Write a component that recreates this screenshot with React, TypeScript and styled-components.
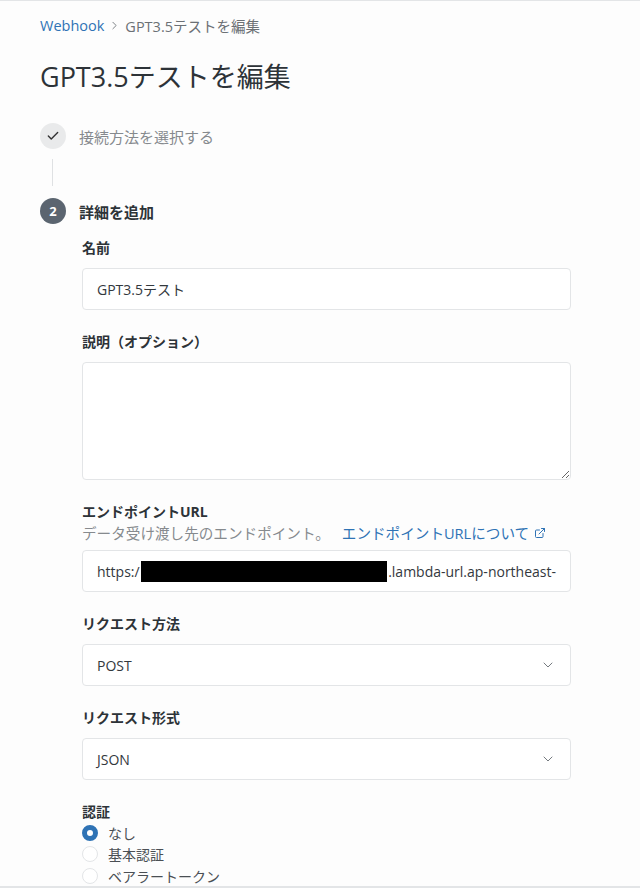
import React from 'react';
import styled, {createGlobalStyle} from 'styled-components';
import {Check, ChevronDown, ChevronRight, ExternalLink} from 'lucide-react';

const GlobalStyle = createGlobalStyle`
  * {
    box-sizing: border-box;
  }

  body {
    margin: 0;
    background: #fdfdfd;
    font-family: "Open Sans", "Noto Sans CJK JP", "Noto Sans", sans-serif;
    color: #2d3338;
  }
`;

const Page = styled.div`
  height: 888px;
  padding: 0 40px;
  border-top: 1px solid #e3e5e7;
  border-bottom: 2px solid #e3e5e7;
  overflow: hidden;
`;

const Breadcrumb = styled.nav`
  display: flex;
  align-items: center;
  gap: 4px;
  height: 20px;
  margin-top: 14px;
  font-size: 14.5px;
  color: #6b7075;
`;

const CrumbLink = styled.a`
  color: #2f73b5;
  text-decoration: none;
`;

const Title = styled.h1`
  margin: 24px 0 0;
  font-size: 27px;
  font-weight: 400;
  line-height: 36px;
  color: #2d3338;
`;

const Step = styled.div`
  display: flex;
  align-items: center;
  gap: 13px;
`;

const StepCircle = styled.div<{$active?: boolean}>`
  display: flex;
  align-items: center;
  justify-content: center;
  width: 26px;
  height: 26px;
  border-radius: 50%;
  background: ${({$active}) => ($active ? '#5b6570' : '#e9eaeb')};
  color: ${({$active}) => ($active ? '#fff' : '#333')};
  font-size: 13px;
  font-weight: 700;
`;

const StepText = styled.span<{$active?: boolean}>`
  font-size: 15px;
  font-weight: ${({$active}) => ($active ? 700 : 400)};
  color: ${({$active}) => ($active ? '#2d3338' : '#868a8e')};
`;

const FirstStep = styled(Step)`
  margin-top: 28px;
`;

const Connector = styled.div`
  width: 1px;
  height: 27px;
  margin: 10px 0 12px 12px;
  background: #dfe1e3;
`;

const Form = styled.div`
  display: flex;
  flex-direction: column;
  gap: 22px;
  width: 489px;
  margin: 14px 0 0 42px;
`;

const Field = styled.div`
  display: flex;
  flex-direction: column;
`;

const Label = styled.label`
  font-size: 14px;
  font-weight: 700;
  line-height: 20px;
  color: #2d3338;
`;

const Help = styled.div`
  display: flex;
  align-items: center;
  gap: 12px;
  font-size: 14.6px;
  line-height: 22px;
  color: #868a8e;
`;

const HelpLink = styled.a`
  display: inline-flex;
  align-items: center;
  gap: 5px;
  color: #2f73b5;
  text-decoration: none;
`;

const Box = styled.div`
  display: flex;
  align-items: center;
  justify-content: space-between;
  height: 42px;
  margin-top: 10px;
  padding: 0 14px;
  border: 1px solid #e3e5e7;
  border-radius: 4px;
  background: #fff;
  font-size: 14px;
  color: #33383d;
  white-space: nowrap;
  overflow: hidden;
`;

const UrlBox = styled(Box)`
  justify-content: flex-start;
  margin-top: 6px;
`;

const Redacted = styled.span`
  display: inline-block;
  width: 247px;
  height: 21px;
  margin: 0 1px;
  background: #000;
`;

const TextArea = styled.textarea`
  height: 118px;
  margin-top: 10px;
  padding: 10px 14px;
  border: 1px solid #e3e5e7;
  border-radius: 4px;
  background: #fff;
  font: inherit;
  resize: vertical;
  outline: none;
`;

const RadioList = styled.div`
  display: flex;
  flex-direction: column;
`;

const RadioRow = styled.div`
  display: flex;
  align-items: center;
  gap: 10px;
  height: 21.5px;
  font-size: 14px;
  color: #4a4f54;
`;

const RadioDot = styled.span<{$checked?: boolean}>`
  width: 16px;
  height: 16px;
  border-radius: 50%;
  border: ${({$checked}) => ($checked ? '5px solid #2f73b5' : '1px solid #e3e5e7')};
  background: #fff;
`;

const auth = [
  {label: 'なし', checked: true},
  {label: '基本認証', checked: false},
  {label: 'ベアラートークン', checked: false},
];

export default function App() {
  return (
    <>
      <GlobalStyle/>
      <Page>
        <Breadcrumb>
          <CrumbLink>Webhook</CrumbLink>
          <ChevronRight size={13} strokeWidth={1.6} color="#6b7075"/>
          <span>GPT3.5テストを編集</span>
        </Breadcrumb>
        <Title>GPT3.5テストを編集</Title>

        <FirstStep>
          <StepCircle><Check size={14} strokeWidth={2.4}/></StepCircle>
          <StepText>接続方法を選択する</StepText>
        </FirstStep>
        <Connector/>
        <Step>
          <StepCircle $active>2</StepCircle>
          <StepText $active>詳細を追加</StepText>
        </Step>

        <Form>
          <Field>
            <Label>名前</Label>
            <Box>GPT3.5テスト</Box>
          </Field>
          <Field>
            <Label>説明（オプション）</Label>
            <TextArea/>
          </Field>
          <Field>
            <Label>エンドポイントURL</Label>
            <Help>
              <span>データ受け渡し先のエンドポイント。</span>
              <HelpLink>
                エンドポイントURLについて
                <ExternalLink size={12} strokeWidth={2}/>
              </HelpLink>
            </Help>
            <UrlBox>
              https:/<Redacted/>.lambda-url.ap-northeast-
            </UrlBox>
          </Field>
          <Field>
            <Label>リクエスト方法</Label>
            <Box>
              POST
              <ChevronDown size={16} strokeWidth={1.4} color="#6b7075"/>
            </Box>
          </Field>
          <Field>
            <Label>リクエスト形式</Label>
            <Box>
              JSON
              <ChevronDown size={16} strokeWidth={1.4} color="#6b7075"/>
            </Box>
          </Field>
          <Field>
            <Label>認証</Label>
            <RadioList>
              {auth.map((a) =>
                <RadioRow key={a.label}>
                  <RadioDot $checked={a.checked}/>
                  {a.label}
                </RadioRow>
              )}
            </RadioList>
          </Field>
        </Form>
      </Page>
    </>
  );
}
